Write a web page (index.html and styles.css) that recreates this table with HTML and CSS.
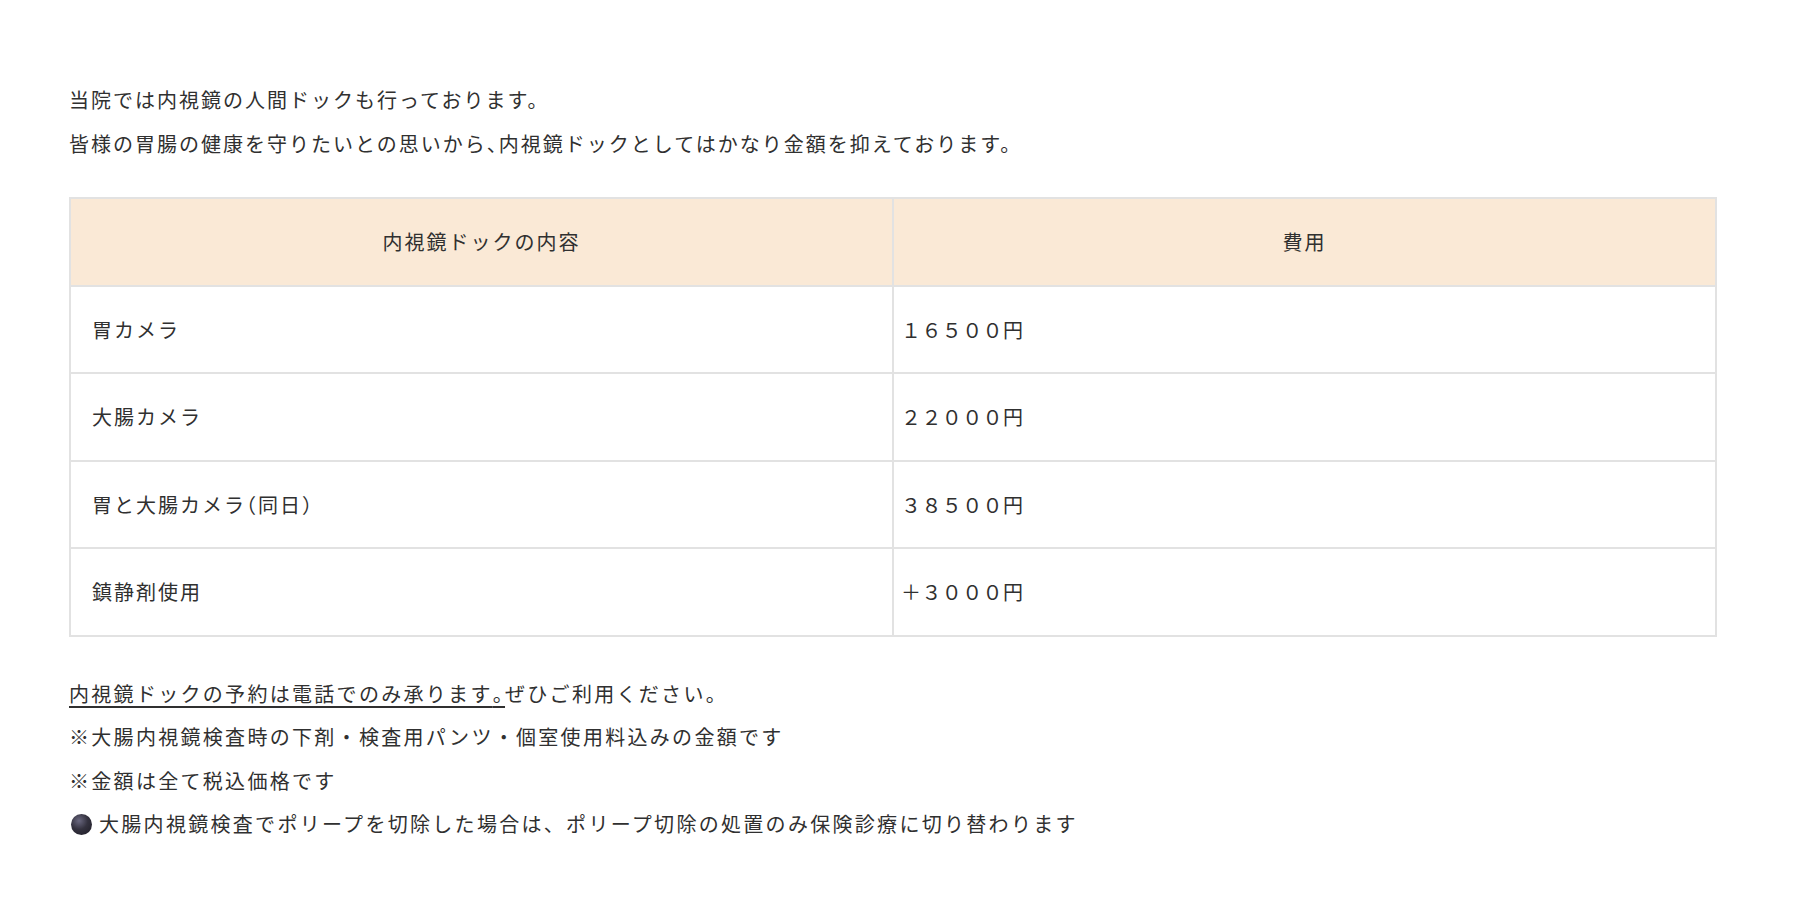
FILE: index.html
```html
<!DOCTYPE html>
<html lang="ja">
<head>
<meta charset="utf-8">
<title>内視鏡ドック</title>
<link rel="stylesheet" href="styles.css">
</head>
<body>
<div class="wrap">
  <div class="intro">
    <p>当院では内視鏡の人間ドックも行っております。</p>
    <p>皆様の胃腸の健康を守りたいとの思いから<span class="hp">、</span>内視鏡ドックとしてはかなり金額を抑えております。</p>
  </div>
  <table class="price">
    <thead>
      <tr><th>内視鏡ドックの内容</th><th>費用</th></tr>
    </thead>
    <tbody>
      <tr><td>胃カメラ</td><td class="num">１６５００円</td></tr>
      <tr><td>大腸カメラ</td><td class="num">２２０００円</td></tr>
      <tr><td>胃と大腸カメラ<span class="hp">（</span>同日<span class="hp">）</span></td><td class="num">３８５００円</td></tr>
      <tr><td>鎮静剤使用</td><td class="num">＋３０００円</td></tr>
    </tbody>
  </table>
  <div class="notes">
    <p><span class="ul">内視鏡ドックの予約は電話でのみ承ります<span class="hp">。</span></span>ぜひご利用ください。</p>
    <p>※大腸内視鏡検査時の下剤・検査用パンツ・個室使用料込みの金額です</p>
    <p>※金額は全て税込価格です</p>
    <p><span class="dot"></span>大腸内視鏡検査でポリープを切除した場合は、ポリープ切除の処置のみ保険診療に切り替わります</p>
  </div>
</div>
</body>
</html>
```

FILE: styles.css
```css
html, body {
  margin: 0;
  padding: 0;
  background: #ffffff;
}
body {
  font-family: "Noto Sans CJK JP", "Noto Sans", sans-serif;
  font-size: 20px;
  letter-spacing: 2px;
  color: #303030;
}
.wrap {
  margin-left: 69px;
  width: 1648px;
  padding-top: 78px;
}
.intro p,
.notes p {
  margin: 0;
  line-height: 43.5px;
}
.notes p {
  letter-spacing: 2.3px;
}
.hp {
  font-feature-settings: "halt";
}
.price {
  width: 100%;
  margin-top: 32px;
  border-collapse: collapse;
  table-layout: fixed;
}
.price th,
.price td {
  border: 2px solid #e2e2e2;
  line-height: 43.5px;
  padding: 21px 21px;
  text-align: left;
  font-weight: normal;
}
.price th {
  background: #fae9d6;
  text-align: center;
}
.price td.num {
  padding-left: 7px;
  letter-spacing: 0.4px;
}
.notes {
  margin-top: 35px;
}
.ul {
  text-decoration: underline;
  text-decoration-thickness: 2px;
  text-underline-offset: 4px;
}
.dot {
  display: inline-block;
  width: 21px;
  height: 21px;
  border-radius: 50%;
  background: radial-gradient(circle at 38% 32%, #6a6880 0%, #34323f 45%, #1c1b24 100%);
  vertical-align: -3px;
  margin-right: 7px;
  margin-left: 2px;
}
```
